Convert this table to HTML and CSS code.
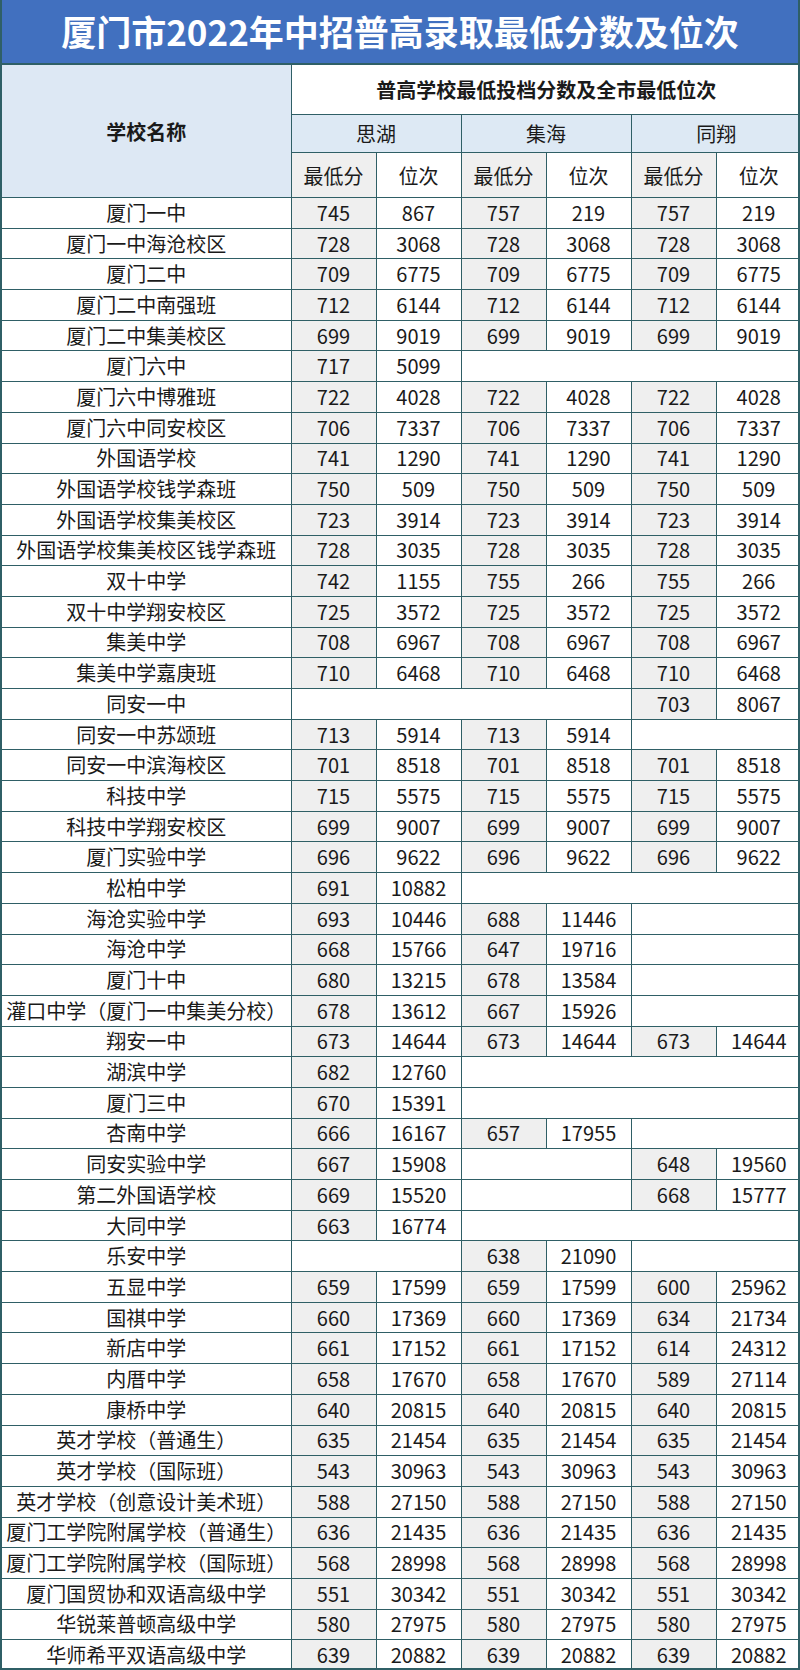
FILE: index.html
```html
<!DOCTYPE html>
<html lang="zh-CN">
<head>
<meta charset="utf-8">
<title>厦门市2022年中招普高录取最低分数及位次</title>
<link rel="stylesheet" href="styles.css">
</head>
<body>
<div class="sheet">
  <div class="title">厦门市2022年中招普高录取最低分数及位次</div>
  <table class="grid">
    <colgroup>
      <col class="c-name"><col class="c-num"><col class="c-num"><col class="c-num"><col class="c-num"><col class="c-num"><col class="c-num">
    </colgroup>
    <thead>
      <tr class="h1">
        <th rowspan="3" class="hname">学校名称</th>
        <th colspan="6" class="htop">普高学校最低投档分数及全市最低位次</th>
      </tr>
      <tr class="h2">
        <th colspan="2" class="hdist">思湖</th>
        <th colspan="2" class="hdist">集海</th>
        <th colspan="2" class="hdist">同翔</th>
      </tr>
      <tr class="h3">
        <th class="hsub g">最低分</th><th class="hsub">位次</th>
        <th class="hsub g">最低分</th><th class="hsub">位次</th>
        <th class="hsub g">最低分</th><th class="hsub">位次</th>
      </tr>
    </thead>
    <tbody>
      <tr><td class="n">厦门一中</td><td class="g">745</td><td>867</td><td class="g">757</td><td>219</td><td class="g">757</td><td>219</td></tr>
      <tr><td class="n">厦门一中海沧校区</td><td class="g">728</td><td>3068</td><td class="g">728</td><td>3068</td><td class="g">728</td><td>3068</td></tr>
      <tr><td class="n">厦门二中</td><td class="g">709</td><td>6775</td><td class="g">709</td><td>6775</td><td class="g">709</td><td>6775</td></tr>
      <tr><td class="n">厦门二中南强班</td><td class="g">712</td><td>6144</td><td class="g">712</td><td>6144</td><td class="g">712</td><td>6144</td></tr>
      <tr><td class="n">厦门二中集美校区</td><td class="g">699</td><td>9019</td><td class="g">699</td><td>9019</td><td class="g">699</td><td>9019</td></tr>
      <tr><td class="n">厦门六中</td><td class="g">717</td><td>5099</td><td colspan="4"></td></tr>
      <tr><td class="n">厦门六中博雅班</td><td class="g">722</td><td>4028</td><td class="g">722</td><td>4028</td><td class="g">722</td><td>4028</td></tr>
      <tr><td class="n">厦门六中同安校区</td><td class="g">706</td><td>7337</td><td class="g">706</td><td>7337</td><td class="g">706</td><td>7337</td></tr>
      <tr><td class="n">外国语学校</td><td class="g">741</td><td>1290</td><td class="g">741</td><td>1290</td><td class="g">741</td><td>1290</td></tr>
      <tr><td class="n">外国语学校钱学森班</td><td class="g">750</td><td>509</td><td class="g">750</td><td>509</td><td class="g">750</td><td>509</td></tr>
      <tr><td class="n">外国语学校集美校区</td><td class="g">723</td><td>3914</td><td class="g">723</td><td>3914</td><td class="g">723</td><td>3914</td></tr>
      <tr><td class="n">外国语学校集美校区钱学森班</td><td class="g">728</td><td>3035</td><td class="g">728</td><td>3035</td><td class="g">728</td><td>3035</td></tr>
      <tr><td class="n">双十中学</td><td class="g">742</td><td>1155</td><td class="g">755</td><td>266</td><td class="g">755</td><td>266</td></tr>
      <tr><td class="n">双十中学翔安校区</td><td class="g">725</td><td>3572</td><td class="g">725</td><td>3572</td><td class="g">725</td><td>3572</td></tr>
      <tr><td class="n">集美中学</td><td class="g">708</td><td>6967</td><td class="g">708</td><td>6967</td><td class="g">708</td><td>6967</td></tr>
      <tr><td class="n">集美中学嘉庚班</td><td class="g">710</td><td>6468</td><td class="g">710</td><td>6468</td><td class="g">710</td><td>6468</td></tr>
      <tr><td class="n">同安一中</td><td colspan="4"></td><td class="g">703</td><td>8067</td></tr>
      <tr><td class="n">同安一中苏颂班</td><td class="g">713</td><td>5914</td><td class="g">713</td><td>5914</td><td colspan="2"></td></tr>
      <tr><td class="n">同安一中滨海校区</td><td class="g">701</td><td>8518</td><td class="g">701</td><td>8518</td><td class="g">701</td><td>8518</td></tr>
      <tr><td class="n">科技中学</td><td class="g">715</td><td>5575</td><td class="g">715</td><td>5575</td><td class="g">715</td><td>5575</td></tr>
      <tr><td class="n">科技中学翔安校区</td><td class="g">699</td><td>9007</td><td class="g">699</td><td>9007</td><td class="g">699</td><td>9007</td></tr>
      <tr><td class="n">厦门实验中学</td><td class="g">696</td><td>9622</td><td class="g">696</td><td>9622</td><td class="g">696</td><td>9622</td></tr>
      <tr><td class="n">松柏中学</td><td class="g">691</td><td>10882</td><td colspan="4"></td></tr>
      <tr><td class="n">海沧实验中学</td><td class="g">693</td><td>10446</td><td class="g">688</td><td>11446</td><td colspan="2"></td></tr>
      <tr><td class="n">海沧中学</td><td class="g">668</td><td>15766</td><td class="g">647</td><td>19716</td><td colspan="2"></td></tr>
      <tr><td class="n">厦门十中</td><td class="g">680</td><td>13215</td><td class="g">678</td><td>13584</td><td colspan="2"></td></tr>
      <tr><td class="n">灌口中学（厦门一中集美分校）</td><td class="g">678</td><td>13612</td><td class="g">667</td><td>15926</td><td colspan="2"></td></tr>
      <tr><td class="n">翔安一中</td><td class="g">673</td><td>14644</td><td class="g">673</td><td>14644</td><td class="g">673</td><td>14644</td></tr>
      <tr><td class="n">湖滨中学</td><td class="g">682</td><td>12760</td><td colspan="4"></td></tr>
      <tr><td class="n">厦门三中</td><td class="g">670</td><td>15391</td><td colspan="4"></td></tr>
      <tr><td class="n">杏南中学</td><td class="g">666</td><td>16167</td><td class="g">657</td><td>17955</td><td colspan="2"></td></tr>
      <tr><td class="n">同安实验中学</td><td class="g">667</td><td>15908</td><td colspan="2"></td><td class="g">648</td><td>19560</td></tr>
      <tr><td class="n">第二外国语学校</td><td class="g">669</td><td>15520</td><td colspan="2"></td><td class="g">668</td><td>15777</td></tr>
      <tr><td class="n">大同中学</td><td class="g">663</td><td>16774</td><td colspan="4"></td></tr>
      <tr><td class="n">乐安中学</td><td colspan="2"></td><td class="g">638</td><td>21090</td><td colspan="2"></td></tr>
      <tr><td class="n">五显中学</td><td class="g">659</td><td>17599</td><td class="g">659</td><td>17599</td><td class="g">600</td><td>25962</td></tr>
      <tr><td class="n">国祺中学</td><td class="g">660</td><td>17369</td><td class="g">660</td><td>17369</td><td class="g">634</td><td>21734</td></tr>
      <tr><td class="n">新店中学</td><td class="g">661</td><td>17152</td><td class="g">661</td><td>17152</td><td class="g">614</td><td>24312</td></tr>
      <tr><td class="n">内厝中学</td><td class="g">658</td><td>17670</td><td class="g">658</td><td>17670</td><td class="g">589</td><td>27114</td></tr>
      <tr><td class="n">康桥中学</td><td class="g">640</td><td>20815</td><td class="g">640</td><td>20815</td><td class="g">640</td><td>20815</td></tr>
      <tr><td class="n">英才学校（普通生）</td><td class="g">635</td><td>21454</td><td class="g">635</td><td>21454</td><td class="g">635</td><td>21454</td></tr>
      <tr><td class="n">英才学校（国际班）</td><td class="g">543</td><td>30963</td><td class="g">543</td><td>30963</td><td class="g">543</td><td>30963</td></tr>
      <tr><td class="n">英才学校（创意设计美术班）</td><td class="g">588</td><td>27150</td><td class="g">588</td><td>27150</td><td class="g">588</td><td>27150</td></tr>
      <tr><td class="n">厦门工学院附属学校（普通生）</td><td class="g">636</td><td>21435</td><td class="g">636</td><td>21435</td><td class="g">636</td><td>21435</td></tr>
      <tr><td class="n">厦门工学院附属学校（国际班）</td><td class="g">568</td><td>28998</td><td class="g">568</td><td>28998</td><td class="g">568</td><td>28998</td></tr>
      <tr><td class="n">厦门国贸协和双语高级中学</td><td class="g">551</td><td>30342</td><td class="g">551</td><td>30342</td><td class="g">551</td><td>30342</td></tr>
      <tr><td class="n">华锐莱普顿高级中学</td><td class="g">580</td><td>27975</td><td class="g">580</td><td>27975</td><td class="g">580</td><td>27975</td></tr>
      <tr><td class="n">华师希平双语高级中学</td><td class="g">639</td><td>20882</td><td class="g">639</td><td>20882</td><td class="g">639</td><td>20882</td></tr>
    </tbody>
  </table>
</div>
</body>
</html>
```
FILE: styles.css
```css
html, body {
  margin: 0;
  padding: 0;
  background: #ffffff;
}
body {
  font-family: "Noto Sans CJK SC", "Noto Sans", sans-serif;
  color: #1a1a1a;
}
.sheet {
  width: 800px;
  height: 1670px;
  box-sizing: border-box;
  border-left: 2px solid #2f5f66;
  border-right: 2px solid #2f5f66;
  border-bottom: 2px solid #2f5f66;
  overflow: hidden;
}
.title {
  height: 65px;
  line-height: 61px;
  background: #4170bf;
  color: #ffffff;
  font-size: 35px;
  font-weight: 700;
  text-align: center;
  border-bottom: 2px solid #2f5f66;
  box-sizing: border-box;
}
.grid {
  width: 796px;
  border-collapse: collapse;
  table-layout: fixed;
}
.c-name { width: 289px; }
.c-num { width: 85px; }
.grid th, .grid td {
  border: 1.5px solid #2f5f66;
  padding: 0;
  text-align: center;
  vertical-align: middle;
  white-space: nowrap;
  font-size: 20px;
  overflow: hidden;
}
.grid tr:first-child th { border-top: none; }
.grid th:first-child, .grid td:first-child { border-left: none; }
.grid tr > :last-child { border-right: none; }
.grid tbody tr:last-child td { border-bottom: none; }
.grid th { font-weight: 400; }
.hname {
  background: #dde8f4;
  font-weight: 700 !important;
}
.htop {
  background: #ffffff;
  font-weight: 700 !important;
  height: 49px;
}
.hdist {
  background: #dde9f4;
  height: 37px;
}
.hsub { height: 44px; background: #ffffff; }
.hsub.g { background: #efefef; }
.grid tbody td { height: 29.7px; line-height: 28px; }
.grid tbody td.g { background: #efefef; }
.grid tbody td.n { background: #ffffff; }
```
